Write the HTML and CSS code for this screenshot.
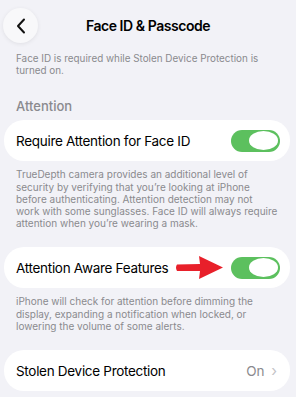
FILE: index.html
```html
<!DOCTYPE html>
<html lang="en">
<head>
    <meta charset="UTF-8">
    <meta name="viewport" content="width=device-width, initial-scale=1.0">
    <title>Face ID &amp; Passcode</title>
    <link rel="stylesheet" href="styles.css">
</head>
<body>
    <div class="header">
        <div class="back-btn">
            <svg width="10" height="16" viewBox="0 0 10 16">
                <path d="M8 1.5 L2 8 L8 14.5" fill="none" stroke="#111" stroke-width="2" stroke-linecap="round" stroke-linejoin="round"/>
            </svg>
        </div>
        <div class="title">Face ID &amp; Passcode</div>
        <div></div>
    </div>

    <p class="note top-note">Face ID is required while Stolen Device Protection is turned on.</p>

    <div class="section-title">Attention</div>

    <div class="card">
        <span class="label">Require Attention for Face ID</span>
        <div class="toggle"><div class="knob"></div></div>
    </div>
    <p class="note">TrueDepth camera provides an additional level of security by verifying that you’re looking at iPhone before authenticating. Attention detection may not<br>work with some sunglasses. Face ID will always require attention when you’re wearing a mask.</p>

    <div class="card">
        <span class="label">Attention Aware Features</span>
        <div class="right">
            <svg class="arrow" width="50" height="25" viewBox="0 0 50 25">
                <path d="M2 9.5 L25 9 L24 1 L48 12.5 L24 24 L25 16 L2 16 Q0 12.7 2 9.5 Z" fill="#e8202a"/>
            </svg>
            <div class="toggle"><div class="knob"></div></div>
        </div>
    </div>
    <p class="note">iPhone will check for attention before dimming the display, expanding a notification when locked, or lowering the volume of some alerts.</p>

    <div class="card">
        <span class="label">Stolen Device Protection</span>
        <span class="value">On <span class="chev">›</span></span>
    </div>
</body>
</html>
```

FILE: styles.css
```css
body {
    margin: 0;
    background: #f2f2f7;
    font-family: Inter, "Noto Sans", sans-serif;
    color: #000;
    width: 296px;
    height: 397px;
    overflow: hidden;
}

.header {
    display: grid;
    grid-template-columns: 35px 1fr 35px;
    align-items: center;
    padding: 8px 3px 0;
    height: 35px;
}

.back-btn {
    width: 35px;
    height: 35px;
    border-radius: 50%;
    background: #f8f8fa;
    box-shadow: 0 1px 4px rgba(0, 0, 0, 0.08);
    display: flex;
    align-items: center;
    justify-content: center;
}

.title {
    text-align: center;
    font-weight: 600;
    font-size: 14px;
    letter-spacing: -0.45px;
}

.note {
    margin: 12px 16px 0;
    font-size: 10px;
    line-height: 12.2px;
    color: #8a8a8e;
}

.top-note {
    margin-top: 9px;
    font-size: 9.9px;
}

.section-title {
    margin: 22px 16px 6px;
    font-size: 13px;
    font-weight: 500;
    color: #8a8a8e;
}

.card {
    margin: 0 6px 0 4px;
    height: 41px;
    background: #fff;
    border-radius: 20px;
    display: flex;
    align-items: center;
    justify-content: space-between;
    padding: 0 10px 0 12px;
    margin-top: 18px;
}

.section-title + .card {
    margin-top: 0;
}

.note + .card {
    margin-top: 18px;
}

.card + .note {
    margin-top: 7px;
}

.label {
    font-size: 13.5px;
    letter-spacing: -0.3px;
    white-space: nowrap;
}

.right {
    display: flex;
    align-items: center;
    gap: 6px;
}

.toggle {
    width: 49px;
    height: 22px;
    border-radius: 11px;
    background: #5cc05e;
    position: relative;
}

.knob {
    position: absolute;
    right: 2px;
    top: 1.5px;
    width: 29px;
    height: 19px;
    border-radius: 50%;
    background: #fff;
}

.value {
    font-size: 13.5px;
    color: #8a8a8e;
    padding-right: 3px;
}

.chev {
    color: #c4c4c7;
    margin-left: 3px;
    font-size: 15px;
}
```
